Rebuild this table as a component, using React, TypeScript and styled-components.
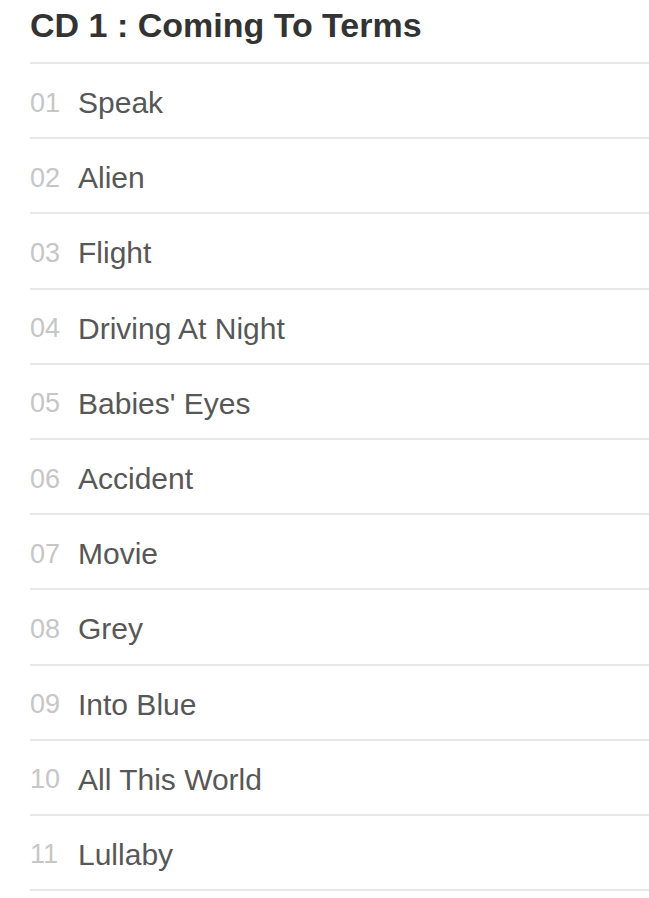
import styled, { createGlobalStyle } from "styled-components";

const GlobalStyle = createGlobalStyle`
  body {
    margin: 0;
    background: #ffffff;
    font-family: "Liberation Sans", Arial, sans-serif;
  }
`;

const tracks = [
  "Speak",
  "Alien",
  "Flight",
  "Driving At Night",
  "Babies' Eyes",
  "Accident",
  "Movie",
  "Grey",
  "Into Blue",
  "All This World",
  "Lullaby",
];

const App = () => {
  return (
    <>
      <GlobalStyle />
      <Wrap>
        <Title>CD 1 : Coming To Terms</Title>
        <TrackList>
          {tracks.map((name, i) => (
            <Track key={i}>
              <TrackNo>{String(i + 1).padStart(2, "0")}</TrackNo>
              <TrackName>{name}</TrackName>
            </Track>
          ))}
        </TrackList>
      </Wrap>
    </>
  );
};

export default App;

const Wrap = styled.div`
  width: 100%;
  padding-left: 30px;
  box-sizing: border-box;
`;
const Title = styled.h2`
  margin: 0;
  height: 64px;
  padding-top: 5px;
  box-sizing: border-box;
  font-size: 34px;
  font-weight: bold;
  color: #333333;
  border-bottom: 2px solid #e8e8e8;
  line-height: 40px;
`;
const TrackList = styled.ul`
  list-style: none;
  margin: 0;
  padding: 0;
`;
const Track = styled.li`
  display: flex;
  align-items: center;
  height: 75.2px;
  padding-top: 5px;
  box-sizing: border-box;
  border-bottom: 2px solid #e8e8e8;
`;
const TrackNo = styled.span`
  width: 48px;
  font-size: 27px;
  color: #c6c6c6;
`;
const TrackName = styled.span`
  font-size: 30px;
  color: #575757;
`;
